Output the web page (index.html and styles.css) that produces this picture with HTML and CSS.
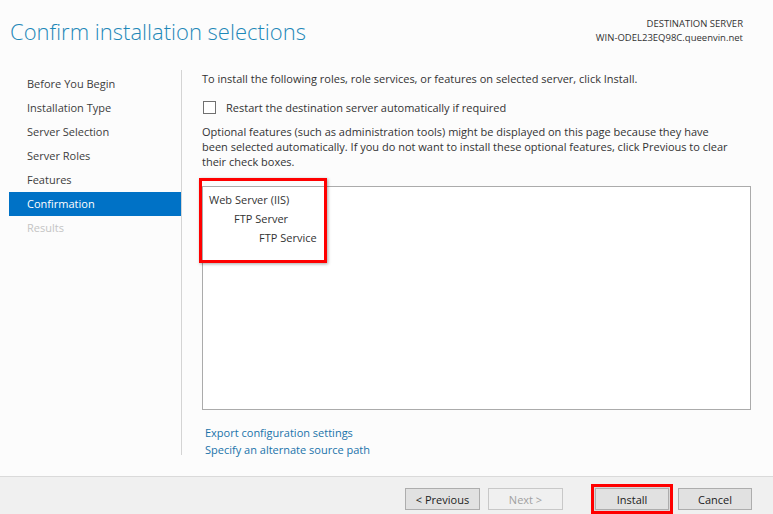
FILE: index.html
```html
<!DOCTYPE html>
<html lang="en">
<head>
    <meta charset="UTF-8">
    <title>Add Roles and Features Wizard</title>
    <link rel="stylesheet" href="styles.css">
</head>
<body>
    <div class="wizard">
        <div class="header">
            <h1>Confirm installation selections</h1>
            <div class="dest">
                <div>DESTINATION SERVER</div>
                <div>WIN-ODEL23EQ98C.queenvin.net</div>
            </div>
        </div>
        <div class="main">
            <ul class="nav">
                <li>Before You Begin</li>
                <li>Installation Type</li>
                <li>Server Selection</li>
                <li>Server Roles</li>
                <li>Features</li>
                <li class="active">Confirmation</li>
                <li class="disabled">Results</li>
            </ul>
            <div class="content">
                <p class="intro">To install the following roles, role services, or features on selected server, click Install.</p>
                <label class="check">
                    <span class="box"></span>
                    Restart the destination server automatically if required
                </label>
                <p class="note">Optional features (such as administration tools) might be displayed on this page because they have been selected automatically. If you do not want to install these optional features, click Previous to clear their check boxes.</p>
                <div class="list">
                    <div class="item lvl0">Web Server (IIS)</div>
                    <div class="item lvl1">FTP Server</div>
                    <div class="item lvl2">FTP Service</div>
                    <div class="mark"></div>
                </div>
                <div class="links">
                    <a href="#">Export configuration settings</a>
                    <a href="#">Specify an alternate source path</a>
                </div>
            </div>
        </div>
        <div class="footer">
            <button>&lt; Previous</button>
            <button disabled>Next &gt;</button>
            <button class="install">Install</button>
            <button class="cancel">Cancel</button>
        </div>
    </div>
</body>
</html>
```

FILE: styles.css
```css
body {
    margin: 0;
    font-family: 'Open Sans', 'Noto Sans', sans-serif;
    font-size: 11px;
    color: #333;
    background: #fcfcfc;
}
.wizard {
    height: 514px;
    display: flex;
    flex-direction: column;
}
.header {
    display: flex;
    justify-content: space-between;
    height: 70px;
}
h1 {
    margin: 16px 0 0 10px;
    font-size: 22px;
    font-weight: 300;
    color: #1e88b8;
}
.dest {
    margin: 17px 30px 0 0;
    text-align: right;
    font-size: 9.5px;
    line-height: 14px;
}
.main {
    flex: 1;
    display: flex;
}
.nav {
    list-style: none;
    margin: 0 0 21px 0;
    padding: 2px 0 0 9px;
    width: 172px;
    border-right: 1px solid #d4d4d4;
}
.nav li {
    height: 24px;
    line-height: 24px;
    padding-left: 18px;
    color: #3c3c3c;
}
.nav li.active {
    background: #0072c6;
    color: #fff;
}
.nav li.disabled {
    color: #c4c4c4;
}
.content {
    padding: 1px 0 0 20px;
    width: 549px;
}
.content p {
    margin: 0;
    line-height: 15px;
}
.check {
    display: flex;
    align-items: center;
    gap: 10px;
    margin: 13px 0 0 1px;
    height: 16px;
}
.box {
    width: 11px;
    height: 11px;
    border: 1px solid #707070;
    background: #fff;
}
.content .note {
    margin-top: 9px;
    width: 534px;
}
.list {
    position: relative;
    margin-top: 17px;
    height: 224px;
    box-sizing: border-box;
    border: 1px solid #ababab;
    background: #fff;
    padding-top: 3px;
}
.item {
    height: 19.2px;
    line-height: 19.2px;
}
.lvl0 { padding-left: 6px; }
.lvl1 { padding-left: 31px; }
.lvl2 { padding-left: 56px; }
.mark {
    position: absolute;
    left: -4px;
    top: -9px;
    width: 122px;
    height: 79px;
    border: 3px solid #f00;
    box-shadow: 1px 1px 3px rgba(0, 0, 0, 0.35);
}
.links {
    display: flex;
    flex-direction: column;
    margin: 14px 0 0 3px;
}
.links a {
    color: #1a73aa;
    text-decoration: none;
    line-height: 17px;
}
.footer {
    background: #f0f0f0;
    border-top: 1px solid #dadada;
    display: flex;
    justify-content: flex-end;
    align-items: flex-start;
    padding: 11px 21px 0 0;
    box-sizing: border-box;
    height: 38px;
}
button {
    width: 75px;
    height: 22px;
    margin-left: 8px;
    font-family: inherit;
    font-size: 11px;
    color: #222;
    background: #e1e1e1;
    border: 1px solid #adadad;
    padding: 0;
}
button:disabled {
    color: #a0a0a0;
    background: #f0f0f0;
    border-color: #c8c8c8;
}
button.install {
    width: 74px;
    margin-left: 32px;
    outline: 3px solid #f00;
    outline-offset: 1px;
    box-shadow: 0 0 0 4px rgba(0, 0, 0, 0.1);
}
button.cancel {
    width: 74px;
    margin-left: 9px;
}
```
